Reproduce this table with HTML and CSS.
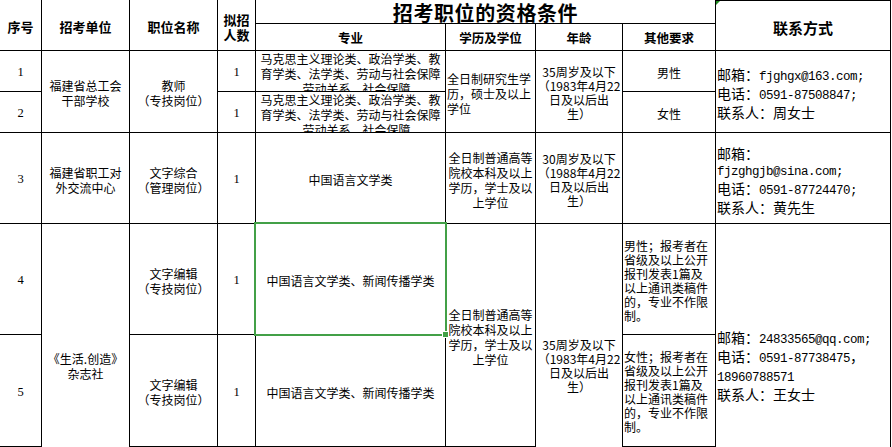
FILE: index.html
```html
<!DOCTYPE html>
<html lang="zh-CN">
<head>
<meta charset="utf-8">
<title>招考职位的资格条件</title>
<link rel="stylesheet" href="styles.css">
</head>
<body>
<div class="sheet">
  <div class="cell h r2"><div>序号</div></div>
  <div class="cell h r2"><div>招考单位</div></div>
  <div class="cell h r2"><div>职位名称</div></div>
  <div class="cell h r2 hn"><div>拟招<br>人数</div></div>
  <div class="cell title c4"><div>招考职位的资格条件</div></div>
  <div class="cell hc r2 tri"><div>联系方式</div></div>
  <div class="cell hs"><div>专业</div></div>
  <div class="cell hs"><div>学历及学位</div></div>
  <div class="cell hs"><div>年龄</div></div>
  <div class="cell hs"><div>其他要求</div></div>

  <div class="cell n"><div>1</div></div>
  <div class="cell r2"><div>福建省总工会<br>干部学校</div></div>
  <div class="cell r2"><div>教师<br>（专技岗位）</div></div>
  <div class="cell n"><div>1</div></div>
  <div class="cell top"><div>马克思主义理论类、政治学类、教<br>育学类、法学类、劳动与社会保障<br>、劳动关系、社会保障</div></div>
  <div class="cell r2 l"><div>全日制研究生学<br>历，硕士及以上<br>学位</div></div>
  <div class="cell r2 age"><div>35周岁及以下<br>（1983年4月22<br>日及以后出<br>生）</div></div>
  <div class="cell"><div>男性</div></div>
  <div class="cell r2 l ct"><div>邮箱：<span class="m">fjghgx@163.com;</span><br>电话：<span class="m">0591-87508847;</span><br>联系人：周女士</div></div>

  <div class="cell n"><div>2</div></div>
  <div class="cell n"><div>1</div></div>
  <div class="cell top"><div>马克思主义理论类、政治学类、教<br>育学类、法学类、劳动与社会保障<br>、劳动关系、社会保障</div></div>
  <div class="cell"><div>女性</div></div>

  <div class="cell n"><div>3</div></div>
  <div class="cell"><div>福建省职工对<br>外交流中心</div></div>
  <div class="cell"><div>文字综合<br>（管理岗位）</div></div>
  <div class="cell n"><div>1</div></div>
  <div class="cell"><div>中国语言文学类</div></div>
  <div class="cell edu"><div>全日制普通高等<br>院校本科及以上<br>学历，学士及以<br>上学位</div></div>
  <div class="cell age"><div>30周岁及以下<br>（1988年4月22<br>日及以后出<br>生）</div></div>
  <div class="cell"><div></div></div>
  <div class="cell l ct"><div>邮箱：<br><span class="m">fjzghgjb@sina.com;</span><br>电话：<span class="m">0591-87724470;</span><br>联系人：黄先生</div></div>

  <div class="cell n"><div>4</div></div>
  <div class="cell r3"><div>《生活.创造》<br>杂志社</div></div>
  <div class="cell"><div>文字编辑<br>（专技岗位）</div></div>
  <div class="cell n"><div>1</div></div>
  <div class="cell sel"><div>中国语言文学类、新闻传播学类</div></div>
  <div class="cell r2 edu"><div>全日制普通高等<br>院校本科及以上<br>学历，学士及以<br>上学位</div></div>
  <div class="cell r3 age"><div>35周岁及以下<br>（1983年4月22<br>日及以后出<br>生）</div></div>
  <div class="cell l other"><div>男性；报考者在<br>省级及以上公开<br>报刊发表1篇及<br>以上通讯类稿件<br>的，专业不作限<br>制。</div></div>
  <div class="cell r3 l ct"><div>邮箱：<span class="m">24833565@qq.com;</span><br>电话：<span class="m">0591-87738475</span>，<br><span class="m">18960788571</span><br>联系人：王女士</div></div>

  <div class="cell n"><div>5</div></div>
  <div class="cell"><div>文字编辑<br>（专技岗位）</div></div>
  <div class="cell n"><div>1</div></div>
  <div class="cell"><div>中国语言文学类、新闻传播学类</div></div>
  <div class="cell l other"><div>女性；报考者在<br>省级及以上公开<br>报刊发表1篇及<br>以上通讯类稿件<br>的，专业不作限<br>制。</div></div>

  <div class="cell"><div></div></div>
  <div class="cell"><div></div></div>
  <div class="cell"><div></div></div>
  <div class="cell"><div></div></div>
  <div class="cell"><div></div></div>
  <div class="cell"><div></div></div>
</div>
</body>
</html>
```
FILE: styles.css
```css
html, body {
  margin: 0;
  padding: 0;
  overflow: hidden;
  background: #fff;
}

.sheet {
  display: grid;
  grid-template-columns: 42px 88px 88px 38px 190px 90px 87px 93px 175px;
  grid-template-rows: 24px 27px 41px 41px 91px 111px 112px 58px;
  width: 891px;
  font-family: "Noto Sans CJK SC", "Noto Sans", sans-serif;
  font-size: 12px;
  line-height: 15px;
  color: #000;
}

.cell {
  box-sizing: border-box;
  border-right: 1px solid #000;
  border-bottom: 1px solid #000;
  display: flex;
  align-items: center;
  justify-content: center;
  text-align: center;
  white-space: nowrap;
  padding-top: 3px;
  min-width: 0;
  min-height: 0;
  overflow: hidden;
}

.r2 { grid-row: span 2; }
.r3 { grid-row: span 3; }
.c4 { grid-column: span 4; }

.h {
  font-weight: 700;
  font-size: 13px;
}

.hn { line-height: 15px; }

.hs {
  font-weight: 700;
  font-size: 12.5px;
  padding-top: 1px;
}

.hc {
  font-weight: 700;
  font-size: 15px;
  border-top: 1px solid #000;
  position: relative;
}

.tri::before {
  content: "";
  position: absolute;
  top: -1px;
  left: 0;
  border-top: 5px solid #1f8a1f;
  border-right: 5px solid transparent;
}

.title {
  font-weight: 700;
  font-size: 20px;
  line-height: 23px;
  letter-spacing: 0.6px;
  padding-top: 2px;
}

.n {
  font-family: "Liberation Serif", serif;
  font-size: 12.5px;
}

.l {
  justify-content: flex-start;
  text-align: left;
  padding-left: 1px;
}

.top {
  align-items: flex-start;
  padding-top: 0;
}

.edu { line-height: 15px; }

.age { line-height: 14px; }

.other { line-height: 14px; }

.ct {
  font-size: 14px;
  line-height: 16px;
}

.m {
  font-family: "Liberation Mono", monospace;
  font-size: 12.5px;
  letter-spacing: -0.5px;
}

.sel {
  position: relative;
  overflow: visible;
  z-index: 1;
}

.sel::after {
  content: "";
  position: absolute;
  top: -2px;
  left: -2px;
  right: -2px;
  bottom: -2px;
  border: 2px solid #43a047;
}

.sel::before {
  content: "";
  position: absolute;
  right: -4px;
  bottom: -4px;
  width: 5px;
  height: 5px;
  background: #43a047;
  border: 1px solid #fff;
  z-index: 2;
}
```
